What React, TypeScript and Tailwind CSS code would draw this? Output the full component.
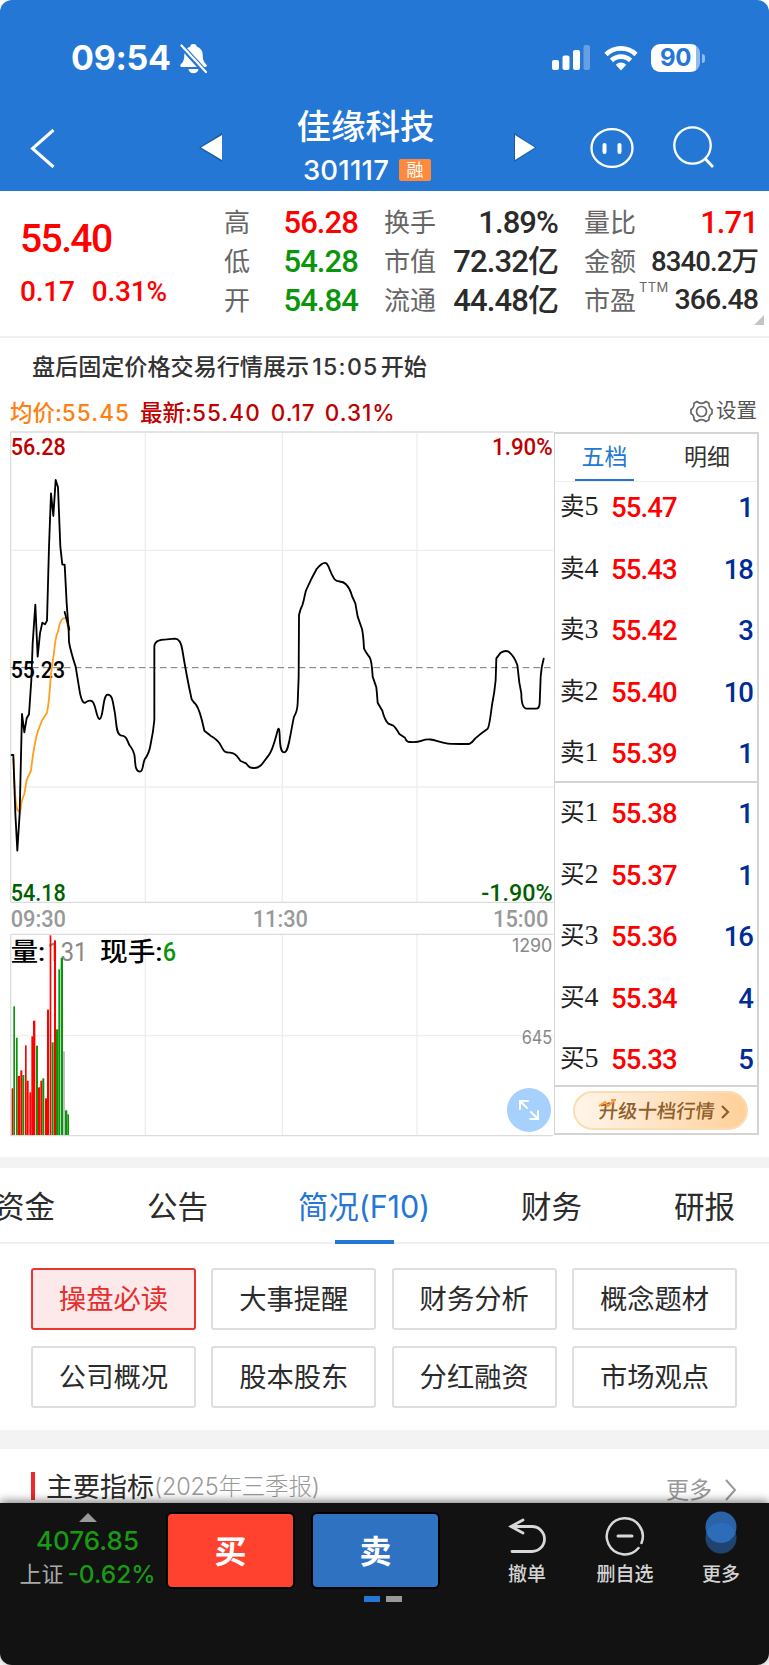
import { clsx } from "clsx";

const SANS = "font-['Inter','Noto_Sans_CJK_SC',sans-serif]";
const NUM = "font-['Roboto','Noto_Sans_CJK_SC',sans-serif]";

type Level = { label: string; no: number; price: string; qty: number };

const asks: Level[] = [
  { label: "卖", no: 5, price: "55.47", qty: 1 },
  { label: "卖", no: 4, price: "55.43", qty: 18 },
  { label: "卖", no: 3, price: "55.42", qty: 3 },
  { label: "卖", no: 2, price: "55.40", qty: 10 },
  { label: "卖", no: 1, price: "55.39", qty: 1 },
];

const bids: Level[] = [
  { label: "买", no: 1, price: "55.38", qty: 1 },
  { label: "买", no: 2, price: "55.37", qty: 1 },
  { label: "买", no: 3, price: "55.36", qty: 16 },
  { label: "买", no: 4, price: "55.34", qty: 4 },
  { label: "买", no: 5, price: "55.33", qty: 5 },
];

const topics = [
  "操盘必读",
  "大事提醒",
  "财务分析",
  "概念题材",
  "公司概况",
  "股本股东",
  "分红融资",
  "市场观点",
];

// x, width, top, colour
const RED = "#ff0000";
const GREEN = "#0a960a";
const bars: [number, number, number, string][] = [
  [35, 5, 1975, RED],
  [40, 5, 1729, GREEN],
  [48, 5, 1823, GREEN],
  [53, 7, 1938, RED],
  [61, 6, 1921, RED],
  [67, 6, 1935, GREEN],
  [75, 5, 1846, RED],
  [80, 6, 1952, RED],
  [88, 6, 1987, RED],
  [94, 5, 1819, RED],
  [99, 7, 1772, RED],
  [108, 6, 1847, GREEN],
  [114, 6, 1972, RED],
  [121, 6, 1952, RED],
  [127, 6, 1945, GREEN],
  [135, 6, 2005, RED],
  [141, 6, 1739, RED],
  [149, 5, 1516, RED],
  [155, 6, 1837, GREEN],
  [162, 6, 1531, RED],
  [168, 7, 1798, GREEN],
  [175, 5, 1618, GREEN],
  [182, 7, 1583, GREEN],
  [189, 6, 1864, "#c0c0c0"],
  [195, 7, 2041, GREEN],
  [202, 5, 2053, GREEN],
];

const pricePath =
  "M35 975H40L46 1150L52 1262L59 1150L62 1020L66 852L73 907L80 865L87 853L94 750L98 640L106 524L113 680L120 610L127 578L135 583L141 572L147 350L153 190L160 258L167 150L174 172L181 350L187 404H194L200 520L206 600L207 636" +
  "Q212 665 227 710L240 790Q247 822 256 818C264 811 275 809 280 818C290 838 290 866 299 867C310 867 308 794 323 794C338 794 338 815 344 845C350 880 348 912 362 916C382 918 380 930 388 945Q402 962 404 980C406 1005 406 1025 420 1025C430 1025 428 1000 434 988Q448 970 452 942Q460 905 463 870V650Q463 628 500 628L525 626Q542 626 547 660Q560 740 575 808Q580 816 588 824C600 840 606 870 613 902L633 918Q652 929 660 942C672 964 672 968 690 968C712 970 714 985 722 993L738 1000C748 1014 752 1014 762 1014C784 1014 790 995 806 976C820 958 826 925 834 898Q838 890 839 915C840 955 844 967 853 967C866 967 870 915 882 860Q892 845 893 820L896 740L897 555Q899 542 908 523C915 500 914 488 920 477Q934 445 950 417Q967 397 977 399C986 400 988 425 1003 447C1013 460 1023 449 1037 462Q1050 475 1056 498L1066 520L1073 560L1086 597Q1090 615 1092 655Q1096 665 1109 682Q1115 690 1118 740L1129 772Q1131 790 1133 818L1147 842Q1154 870 1165 881L1180 887Q1188 894 1198 912L1215 923Q1219 936 1230 936Q1250 938 1266 932C1292 922 1310 935 1340 940Q1350 942 1408 942Q1416 938 1426 925Q1440 912 1463 896Q1468 890 1476 825Q1484 785 1487 750L1489 685L1502 668Q1515 660 1526 665Q1542 677 1552 705L1558 758L1564 790Q1564 835 1580 836H1608Q1618 836 1619 820L1622 740Q1624 710 1631 686";

const avgPath =
  "M40 985L44 1070Q47 1125 52 1140L60 1147L66 1110L73 1092L80 1050L93 1022Q102 940 114 902L127 870L141 848Q148 815 152 740Q158 690 162 670Q166 620 174 605Q180 570 190 565L198 564L206 600";

function StatusBar() {
  return (
    <div className="flex h-[103px] items-start pt-[41px] pr-[64px] pl-[71px] text-white">
      <span className="w-[108px] text-[34px] leading-[34px] font-bold tracking-[-0.300px]">
        09:54
      </span>
      <svg width="29" height="32" viewBox="0 0 29 32" className="mt-px">
        <path
          d="M14.500 2c-2.200 0-3.300 1.200-3.300 2.700C7 6 5.300 9 5.300 13c0 6-1.700 7.500-3.700 9.500-.8 1.200-.3 2.500 1.200 2.500h23.400c1.500 0 2-1.300 1.200-2.500-2-2-3.700-3.500-3.700-9.500 0-4-1.700-7-5.900-8.300C17.800 3.200 16.700 2 14.500 2ZM9.500 27a5 4.200 0 0 0 10 0Z"
          fill="#fff"
        />
        <path d="M1 2.500 27 31" stroke="#2477d5" strokeWidth="5.500" />
        <path
          d="M2.500 3.500 27 30"
          stroke="#fff"
          strokeWidth="2.200"
          strokeLinecap="round"
        />
      </svg>
      <svg width="38" height="26" className="mt-[4px] ml-auto" fill="#fff">
        <rect x="0" y="15" width="7" height="10" rx="2" />
        <rect x="10.500" y="10.500" width="7" height="14.500" rx="2" />
        <rect x="21" y="5" width="7" height="20" rx="2" />
        <rect x="31.500" y="0" width="6.500" height="25" rx="2" opacity=".3" />
      </svg>
      <svg
        width="34"
        height="26"
        viewBox="0 0 34 26"
        className="mt-[4px] ml-[14px]"
        fill="none"
        stroke="#fff"
        strokeWidth="4.600"
      >
        <path d="M2 9.500a21.500 21.500 0 0 1 30 0" />
        <path d="M7.500 15.500a13.500 13.500 0 0 1 19 0" />
        <path
          d="M17 25.500 11.800 19.800a7.300 7.300 0 0 1 10.400 0Z"
          fill="#fff"
          stroke="none"
        />
      </svg>
      <div className="mt-[3px] ml-[13px] flex items-center">
        <div className="flex h-[28px] w-[49px] items-center justify-center rounded-[9px] bg-linear-to-r from-white from-92% to-white/50 to-92% text-[24px] leading-none font-bold tracking-[-0.500px] text-[#2477d5]">
          90
        </div>
        <div className="ml-[2px] h-[9px] w-[3px] rounded-r-full bg-white/50" />
      </div>
    </div>
  );
}

function TitleBar() {
  return (
    <div className="flex h-[88px] text-white">
      <svg width="190" height="88" fill="none" stroke="#fff">
        <path d="M53.500 27 32.500 45.500 53.500 64" strokeWidth="3" />
      </svg>
      <svg width="40" height="88">
        <path d="M32 30v29L9 44.500Z" fill="#00000040" />
        <path d="M32 32v25L11 44.500Z" fill="#fff" />
      </svg>
      <div className="flex w-[271px] flex-col items-center pt-[6px]">
        <div className="text-[34.500px] leading-[36px] font-medium">佳缘科技</div>
        <div className="mt-[12px] flex items-center gap-[10px] pl-[3px]">
          <span className="text-[27.500px] leading-[26px] font-medium tracking-[0.200px]">
            301117
          </span>
          <span className="flex h-[22px] w-[32px] items-center justify-center rounded-[2px] bg-[#ff8a3c] text-[17px] leading-none">
            融
          </span>
        </div>
      </div>
      <svg width="60" height="88">
        <path d="M13 30v29L35.500 44.500Z" fill="#00000040" />
        <path d="M14 32v25L34 44.500Z" fill="#fff" />
      </svg>
      <svg
        width="208"
        height="88"
        fill="none"
        stroke="#fff"
        strokeWidth="2.300"
        strokeLinecap="round"
      >
        <ellipse cx="51" cy="45" rx="20.500" ry="18.800" />
        <path d="M43.500 42v7M58.500 42v7" strokeWidth="4" />
        <circle cx="131.500" cy="42.500" r="18.200" />
        <path d="M144 55.500 152 64" strokeLinecap="butt" strokeWidth="2.800" />
      </svg>
    </div>
  );
}

function Stat({
  label,
  value,
  className,
  size = "text-[31px]",
  sup,
}: {
  label: string;
  value: string;
  className?: string;
  size?: string;
  sup?: string;
}) {
  return (
    <div className="flex h-[39px] items-center justify-between">
      <span className="relative text-[26px] leading-none whitespace-nowrap text-[#666]">
        {label}
        {sup && (
          <sup className="absolute top-[-7px] left-[55px] text-[13px] leading-none tracking-[0.300px]">
            {sup}
          </sup>
        )}
      </span>
      <span
        className={clsx(
          NUM,
          "leading-none font-medium tracking-[-0.900px] whitespace-nowrap",
          size,
          className,
        )}
      >
        {value}
      </span>
    </div>
  );
}

function Quote() {
  return (
    <section className="relative flex h-[147px] border-b-2 border-[#f0f0f0] pt-[12px] pl-[20px]">
      <div className={clsx(NUM, "w-[204px] font-medium text-[#ff0000]")}>
        <div className="pt-[16px] text-[39px] leading-[40px] tracking-[-1.600px]">
          55.40
        </div>
        <div className="mt-[19px] flex gap-[17px] text-[28px] leading-[28px] tracking-[-0.200px]">
          <span>0.17</span>
          <span>0.31%</span>
        </div>
      </div>
      <div className="w-[134px]">
        <Stat label="高" value="56.28" className="text-[#ff0000]" />
        <Stat label="低" value="54.28" className="text-[#0a960a]" />
        <Stat label="开" value="54.84" className="text-[#0a960a]" />
      </div>
      <div className="ml-[26px] w-[174px] text-[#2b2b2b]">
        <Stat label="换手" value="1.89%" />
        <Stat label="市值" value="72.32亿" />
        <Stat label="流通" value="44.48亿" />
      </div>
      <div className="ml-[26px] w-[174px] text-[#2b2b2b]">
        <Stat label="量比" value="1.71" className="text-[#ff0000]" />
        <Stat label="金额" value="8340.2万" size="text-[27.500px]" />
        <Stat label="市盈" value="366.48" size="text-[28.500px]" sup="TTM" />
      </div>
      <svg width="10" height="10" className="absolute right-[5px] bottom-[11px]">
        <path d="M10 0V10H0Z" fill="#c4c4c4" />
      </svg>
    </section>
  );
}

function ChartText({
  x,
  y,
  w,
  fill,
  size = 72,
  weight = 500,
  children,
}: {
  x: number;
  y: number;
  w: number;
  fill: string;
  size?: number;
  weight?: number;
  children: string;
}) {
  return (
    <text
      x={x}
      y={y}
      textLength={w}
      lengthAdjust="spacingAndGlyphs"
      fill={fill}
      fontSize={size}
      fontWeight={weight}
    >
      {children}
    </text>
  );
}

function Chart() {
  return (
    <svg
      width="554"
      height="710"
      viewBox="0 0 1662 2130"
      fill="none"
      className={clsx(NUM, "shrink-0")}
    >
      <g stroke="#eeeeee" strokeWidth="4">
        <path d="M436 8V1417M847 8V1417M1251 8V1417M32 361H1660M32 1071H1660" />
        <path d="M436 1513V2116M847 1513V2116M1251 1513V2116M32 1817H1660" />
      </g>
      <path
        d="M1660 6H32V1417M32 1417H1660M32 1513H1660M32 1513V2117H1660"
        stroke="#dcdcdc"
        strokeWidth="4"
      />
      <path
        d="M32 713H1660"
        stroke="#777"
        strokeWidth="3"
        strokeDasharray="20 12"
      />
      <ChartText x={32} y={74} w={165} fill="#c00000">56.28</ChartText>
      <ChartText x={1476} y={74} w={182} fill="#c00000">1.90%</ChartText>
      <ChartText x={32} y={743} w={163} fill="#000">55.23</ChartText>
      <ChartText x={32} y={1412} w={165} fill="#006000">54.18</ChartText>
      <ChartText x={1444} y={1412} w={214} fill="#006000">-1.90%</ChartText>
      <g strokeWidth="5.500" strokeLinejoin="round" strokeLinecap="round">
        <path d={avgPath} stroke="#ffa020" />
        <path d={pricePath} stroke="#000" />
        <path d="M194 546L208 598" stroke="#000" />
      </g>
      <ChartText x={32} y={1492} w={166} fill="#999">09:30</ChartText>
      <ChartText x={758} y={1492} w={166} fill="#999">11:30</ChartText>
      <ChartText x={1479} y={1492} w={166} fill="#999">15:00</ChartText>

      <ChartText x={32} y={1592} w={104} size={78} fill="#000">量:</ChartText>
      <ChartText x={142} y={1592} w={120} size={80} weight={400} fill="#888">131</ChartText>
      <ChartText x={300} y={1592} w={188} size={78} fill="#000">现手:</ChartText>
      <ChartText x={488} y={1592} w={40} size={80} fill={GREEN}>6</ChartText>
      {bars.map(([x, w, top, fill]) => (
        <rect key={x} x={x} y={top} width={w} height={2115 - top} fill={fill} />
      ))}
      <g className={SANS}>
        <ChartText x={1536} y={1566} w={121} size={54} weight={400} fill="#888">1290</ChartText>
        <ChartText x={1565} y={1843} w={92} size={54} weight={400} fill="#888">645</ChartText>
      </g>
      <circle cx="1587" cy="2040" r="66" fill="#a6d1fc" />
      <path
        d="M1586 2013H1560V2039M1560 2013L1583 2036M1588 2067H1614V2041M1614 2067L1591 2044"
        stroke="#fff"
        strokeWidth="6"
      />
    </svg>
  );
}

function LevelRow({ level }: { level: Level }) {
  return (
    <div className="flex h-[61.500px] items-start pt-[10px] pr-[4px] pl-[5px]">
      <span className="w-[51px] text-[24.500px] leading-[28px] whitespace-nowrap text-[#222]">
        {level.label}
        <span className="font-['Liberation_Serif',serif] text-[28px] leading-none">
          {level.no}
        </span>
      </span>
      <span
        className={clsx(
          NUM,
          "mt-[2px] text-[27.500px] leading-[28px] font-medium tracking-[-0.900px] text-[#ff0000]",
        )}
      >
        {level.price}
      </span>
      <span
        className={clsx(
          NUM,
          "mt-[2px] ml-auto text-[27.500px] leading-[28px] font-medium tracking-[-1px] text-[#002c96]",
        )}
      >
        {level.qty}
      </span>
    </div>
  );
}

function OrderBook() {
  return (
    <div className="mt-[2px] flex h-[703px] w-[205px] flex-col border-2 border-l-1 border-[#d4d4d4]">
      <div className="flex h-[48px] border-b border-[#eee] text-[23px]">
        <div className="ml-[20px] flex w-[59px] items-center justify-center border-b-2 border-[#2477d5] pt-[2px] text-[#2477d5]">
          五档
        </div>
        <div className="ml-[37px] flex w-[72px] items-center justify-center text-[#333]">
          明细
        </div>
      </div>
      <div className="h-[301px] border-b-2 border-[#d4d4d4]">
        {asks.map((l) => (
          <LevelRow key={l.no} level={l} />
        ))}
      </div>
      <div className="h-[304px] border-b-2 border-[#d4d4d4] pt-[5px]">
        {bids.map((l) => (
          <LevelRow key={l.no} level={l} />
        ))}
      </div>
      <div className="relative mt-[4px] ml-[18px] flex h-[39px] w-[175px] items-center rounded-full border-2 border-[#fbdcb4] bg-linear-to-r from-[#fff5e9] to-[#ffd09a] pt-[2px] pl-[24px] text-[#8f5f2c]">
        <span className="inline-block skew-x-[-6deg] text-[19.300px] leading-none font-medium whitespace-nowrap">
          升级十档行情
        </span>
        <svg width="10" height="16" fill="none" className="ml-[5px]">
          <path d="M2 2 8 8 2 14" stroke="#8f5f2c" strokeWidth="2.200" />
        </svg>
        <svg
          width="20"
          height="9"
          fill="none"
          className="absolute top-[6px] left-[23px]"
        >
          <path
            d="M1 7 7 3 10 7 17 1M13 1H18"
            stroke="#ff9430"
            strokeWidth="2"
          />
        </svg>
      </div>
    </div>
  );
}

function NavTabs() {
  const tab = "text-[30.500px] leading-[32px] whitespace-nowrap";
  return (
    <nav className="flex h-[76px] items-start border-b-2 border-[#f0f0f0] pt-[23px] text-[#2b2b2b]">
      <div className="flex w-[55px] justify-end overflow-hidden">
        <span className={tab}>资金</span>
      </div>
      <span className={clsx(tab, "ml-[92px] w-[150px]")}>公告</span>
      <span
        className={clsx(
          tab,
          "flex w-[134px] flex-col items-center tracking-[-0.100px] text-[#2477d5]",
        )}
      >
        简况(F10)
        <i className="mt-[17px] h-[4px] w-[59px] bg-[#2477d5]" />
      </span>
      <span className={clsx(tab, "ml-[90px] w-[153px]")}>财务</span>
      <span className={tab}>研报</span>
    </nav>
  );
}

function BottomBar() {
  const action =
    "flex flex-col items-center text-[19px] leading-[20px] font-medium text-[#d4d4d4]";
  return (
    <footer className="relative flex h-[162px] rounded-b-[12px] bg-[#121212] shadow-[0_-2px_10px_rgba(0,0,0,0.5)]">
      <div className="flex w-[168px] flex-col items-center pl-[7px]">
        <svg width="18" height="9" className="mt-[10px]">
          <path d="M9 0 18 9H0Z" fill="#999" />
        </svg>
        <span className="mt-[5px] text-[26px] leading-[28px] font-medium text-[#1a9a14]">
          4076.85
        </span>
        <span className="mt-[4px] flex items-center gap-[4px] leading-[30px] whitespace-nowrap">
          <span className="text-[22px] text-[#aaa]">上证</span>
          <span className="text-[24.500px] font-medium text-[#1a9a14]">
            -0.62%
          </span>
        </span>
      </div>
      <div>
        <div className="mt-[11px] flex gap-[20px] text-[32px] font-bold text-white">
          <button className="h-[73px] w-[125px] rounded-[4px] bg-[#ff4230] pt-[2px] shadow-[0_0_0_2px_#000]">
            买
          </button>
          <button className="h-[73px] w-[125px] rounded-[4px] bg-[#3072c2] pt-[2px] shadow-[0_0_0_2px_#000]">
            卖
          </button>
        </div>
        <div className="mt-[9px] ml-[196px] flex gap-[6px]">
          <i className="h-[6px] w-[16px] bg-[#2477d5]" />
          <i className="h-[6px] w-[16px] bg-[#999]" />
        </div>
      </div>
      <div className={clsx(action, "ml-[55px] w-[68px]")}>
        <svg
          width="40"
          height="40"
          fill="none"
          stroke="#d8d8d8"
          strokeWidth="2.800"
          strokeLinecap="round"
          className="mt-[13px] mb-[9px]"
        >
          <path d="M16 4 4 10.500 16 17M4 10.500H25A12.500 12.500 0 0 1 25 35.500H5" />
        </svg>
        撤单
      </div>
      <div className={clsx(action, "ml-[28px] w-[72px]")}>
        <svg
          width="40"
          height="40"
          fill="none"
          stroke="#d8d8d8"
          strokeWidth="2.500"
          strokeLinecap="round"
          className="mt-[13px] mb-[9px]"
        >
          <path d="M36.500 27A18 18 0 1 0 33.500 32" />
          <path d="M13 20H27" strokeWidth="3" />
        </svg>
        删自选
      </div>
      <div className={clsx(action, "ml-[35px] w-[50px]")}>
        <svg width="32" height="44" className="mt-[8px] mb-[10px]">
          <circle cx="16" cy="27" r="15.500" fill="#204470" />
          <circle cx="16" cy="16" r="15.500" fill="#2a63a8" />
          <path
            d="M5 16a15.500 15.500 0 0 1 22 0 15.500 15.500 0 0 1 3.500 6A15.500 15.500 0 0 1 1.500 22 15.500 15.500 0 0 1 5 16Z"
            fill="#2d6cb8"
          />
        </svg>
        更多
      </div>
    </footer>
  );
}

export default function App() {
  return (
    <div
      className={clsx(
        SANS,
        "flex h-[1665px] w-[769px] flex-col overflow-hidden bg-white",
      )}
    >
      <header className="h-[191px] shrink-0 rounded-t-[12px] bg-[#2477d5]">
        <StatusBar />
        <TitleBar />
      </header>
      <Quote />
      <div className="h-[60px] pt-[16px] pl-[32px] text-[23.100px] leading-[26px] font-medium text-[#333]">
        盘后固定价格交易行情展示
        <span className="ml-[3px] tracking-[1.300px]">15:05</span>
        <span className="ml-[2px]">开始</span>
      </div>
      <div className="flex h-[32px] items-center pr-[12px] pb-[2px] pl-[10px] text-[22.500px] leading-[26px] font-medium whitespace-nowrap text-[#c00000]">
        <span className="text-[#ff8010]">
          均价:<span className="tracking-[1.100px]">55.45</span>
        </span>
        <span className="ml-[10px]">
          最新:<span className="tracking-[1.100px]">55.40</span>
        </span>
        <span className="ml-[10px] tracking-[1px]">0.17</span>
        <span className="ml-[9px] tracking-[1px]">0.31%</span>
        <span className="ml-auto flex items-center gap-[3px] pb-[4px] text-[20.500px] font-normal text-[#555]">
          <svg
            width="23"
            height="23"
            viewBox="0 0 23 23"
            fill="none"
            stroke="#666"
            strokeWidth="1.700"
            strokeLinejoin="round"
          >
            <path d="M7 1.500Q9 3.300 11.500 3.300 14 3.300 16 1.500L19 3.300Q18.600 7.500 22 9.500V13.500Q18.600 15.500 19 19.700L16 21.500Q14 19.700 11.500 19.700 9 19.700 7 21.500L4 19.700Q4.400 15.500 1 13.500V9.500Q4.400 7.500 4 3.300Z" />
            <circle cx="11.500" cy="11.500" r="5" />
          </svg>
          设置
        </span>
      </div>
      <div className="flex h-[727px] shrink-0">
        <Chart />
        <OrderBook />
      </div>
      <div className="h-[11px] shrink-0 bg-[#f3f3f3]" />
      <NavTabs />
      <div className="grid h-[186px] shrink-0 grid-cols-4 content-start gap-x-[15.500px] gap-y-[16px] pt-[24px] pr-[32px] pl-[31px] text-[27.300px] text-[#2b2b2b]">
        {topics.map((t, i) => (
          <div
            key={t}
            className={clsx(
              "flex h-[62px] items-center justify-center rounded-[3px] border-2 pt-[2px]",
              i === 0
                ? "border-[#e83535] bg-[#fde9e9] text-[#e62e2e]"
                : "border-[#dedede]",
            )}
          >
            {t}
          </div>
        ))}
      </div>
      <div className="h-[19px] shrink-0 bg-[#f3f3f3]" />
      <section className="flex h-[54px] shrink-0 items-start pt-[20px] pr-[32px] pl-[31px]">
        <i className="mt-[3px] h-[28px] w-[4px] bg-[#f02828]" />
        <span className="mt-[2px] ml-[11px] text-[27px] leading-[34px] text-[#2b2b2b]">
          主要指标
        </span>
        <span className="mt-px text-[23.500px] leading-[34px] font-light tracking-[-0.200px] text-[#999]">
          (2025年三季报)
        </span>
        <span className="mt-[4px] ml-auto flex items-center gap-[12px] text-[23px] leading-[34px] text-[#999]">
          更多
          <svg width="13" height="22" fill="none">
            <path d="M2 1 11 11 2 21" stroke="#999" strokeWidth="2" />
          </svg>
        </span>
      </section>
      <BottomBar />
    </div>
  );
}
